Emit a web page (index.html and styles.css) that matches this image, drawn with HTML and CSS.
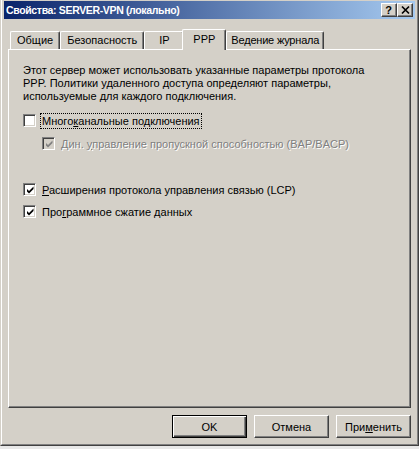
FILE: index.html
```html
<!DOCTYPE html>
<html lang="ru">
<head>
<meta charset="utf-8">
<title>Свойства: SERVER-VPN (локально)</title>
<link rel="stylesheet" href="styles.css">
</head>
<body>
<div class="window">
  <div class="frame">
    <div class="titlebar">
      <span class="title">Свойства: SERVER-VPN (локально)</span>
      <div class="caption-buttons">
        <span class="cbtn help">?</span>
        <span class="cbtn close">
          <svg width="12" height="10" viewBox="0 0 12 10"><path d="M2 1.5 L9 8.5 M9 1.5 L2 8.5" stroke="#000" stroke-width="1.7" fill="none"/></svg>
        </span>
      </div>
    </div>
    <div class="content">
      <div class="tabs">
        <div class="tab">Общие</div>
        <div class="tab">Безопасность</div>
        <div class="tab">IP</div>
        <div class="tab active">PPP</div>
        <div class="tab">Ведение журнала</div>
      </div>
      <div class="panel">
        <p class="intro">Этот сервер может использовать указанные параметры протокола PPP. Политики удаленного доступа определяют параметры, используемые для каждого подключения.</p>
        <div class="check-row">
          <span class="box"></span>
          <span class="label focused">Много<u>к</u>анальные подключения</span>
        </div>
        <div class="check-row sub disabled">
          <span class="box"><svg width="9" height="9" viewBox="0 0 9 9"><path d="M1 3 V5.5 L3 7.5 L7.5 3 V0.5 L3 5 Z" fill="#808080"/></svg></span>
          <span class="label">Дин. <u>у</u>правление пропускной способностью (BAP/BACP)</span>
        </div>
        <div class="check-row lcp">
          <span class="box"><svg width="9" height="9" viewBox="0 0 9 9"><path d="M1 3 V5.5 L3 7.5 L7.5 3 V0.5 L3 5 Z" fill="#000"/></svg></span>
          <span class="label"><u>Р</u>асширения протокола управления связью (LCP)</span>
        </div>
        <div class="check-row compress">
          <span class="box"><svg width="9" height="9" viewBox="0 0 9 9"><path d="M1 3 V5.5 L3 7.5 L7.5 3 V0.5 L3 5 Z" fill="#000"/></svg></span>
          <span class="label">Про<u>г</u>раммное сжатие данных</span>
        </div>
      </div>
      <div class="buttons">
        <button class="btn default">OK</button>
        <button class="btn">Отмена</button>
        <button class="btn">При<u>м</u>енить</button>
      </div>
    </div>
  </div>
</div>
</body>
</html>
```
FILE: styles.css
```css
html, body {
  margin: 0;
  padding: 0;
}
body {
  background: #e8e8e8;
  font-family: "Liberation Sans", Arial, sans-serif;
  font-size: 11px;
  color: #000;
  overflow: hidden;
}
.window {
  width: 419px;
  height: 449px;
  margin-top: -3px;
  box-sizing: border-box;
  border: 1px solid;
  border-color: #d4d0c8 #404040 #404040 #d4d0c8;
  background: #d4d0c8;
}
.frame {
  height: 100%;
  box-sizing: border-box;
  border: 1px solid;
  border-color: #ffffff #808080 #808080 #ffffff;
  padding: 2px;
  display: flex;
  flex-direction: column;
}
.titlebar {
  height: 18px;
  flex: none;
  background: linear-gradient(to right, #0a246a, #a6caf0);
  display: flex;
  align-items: center;
  justify-content: space-between;
  padding: 0 2px 0 2px;
}
.title {
  color: #fff;
  font-weight: bold;
  font-size: 10.5px;
  letter-spacing: -0.35px;
  white-space: nowrap;
}
.caption-buttons {
  display: flex;
}
.cbtn {
  width: 16px;
  height: 14px;
  box-sizing: border-box;
  background: #d4d0c8;
  border: 1px solid;
  border-color: #ffffff #404040 #404040 #ffffff;
  box-shadow: inset -1px -1px 0 #808080;
  display: flex;
  align-items: center;
  justify-content: center;
}
.help {
  font-weight: bold;
  font-size: 11px;
  line-height: 12px;
  padding-right: 1px;
}
.close svg {
  display: block;
  margin-left: 1px;
}
.content {
  flex: 1;
  display: flex;
  flex-direction: column;
  padding: 0 4px 0 4px;
}
.tabs {
  margin-top: 10px;
  height: 20px;
  display: flex;
  align-items: flex-end;
  padding-left: 2px;
  position: relative;
  z-index: 1;
}
.tab {
  height: 18px;
  box-sizing: border-box;
  min-width: 40px;
  padding: 0 6px;
  border-top: 1px solid #fff;
  border-left: 1px solid #fff;
  border-right: 1px solid #404040;
  box-shadow: inset -1px 0 0 #808080;
  border-radius: 2px 2px 0 0;
  text-align: center;
  line-height: 17px;
  white-space: nowrap;
}
.tab.active {
  height: 21px;
  margin: 0 -2px -1px -2px;
  min-width: 44px;
  background: #d4d0c8;
  line-height: 18px;
  position: relative;
  z-index: 2;
}
.tab.active + .tab {
  margin-left: 2px;
  padding: 0 4px;
  letter-spacing: -0.2px;
}
.panel {
  height: 359px;
  box-sizing: border-box;
  border: 1px solid;
  border-color: #ffffff #404040 #404040 #ffffff;
  box-shadow: inset -1px -1px 0 #808080;
  padding: 14px 14px;
}
.intro {
  margin: 0;
  line-height: 13px;
  width: 360px;
}
.check-row {
  display: flex;
  align-items: center;
  height: 13px;
  margin-top: 11px;
}
.check-row.sub {
  margin-top: 10px;
  margin-left: 19px;
}
.check-row.lcp {
  margin-top: 33px;
}
.check-row.compress {
  margin-top: 9px;
}
.box {
  width: 13px;
  height: 13px;
  box-sizing: border-box;
  flex: none;
  background: #fff;
  border: 1px solid;
  border-color: #808080 #fff #fff #808080;
  box-shadow: inset 1px 1px 0 #404040, inset -1px -1px 0 #d4d0c8;
  display: flex;
  align-items: center;
  justify-content: center;
}
.box svg {
  display: block;
  margin: 1px 0 0 1px;
}
.disabled .box {
  background: #d4d0c8;
}
.label {
  margin-left: 5px;
  padding: 0 1px;
  line-height: 14px;
  white-space: nowrap;
}
.label.focused {
  outline: 1px dotted #000;
}
.disabled .label {
  color: #808080;
  text-shadow: 1px 1px 0 #fff;
}
.buttons {
  margin-top: 7px;
  display: flex;
  justify-content: flex-end;
  gap: 7px;
}
.btn {
  width: 75px;
  height: 23px;
  box-sizing: border-box;
  font: inherit;
  color: #000;
  background: #d4d0c8;
  border: 1px solid;
  border-color: #ffffff #404040 #404040 #ffffff;
  box-shadow: inset -1px -1px 0 #808080;
  padding: 0;
  margin: 0;
}
.btn.default {
  border-color: #000;
  box-shadow: inset 1px 1px 0 #fff, inset -1px -1px 0 #404040, inset -2px -2px 0 #808080;
}
```
